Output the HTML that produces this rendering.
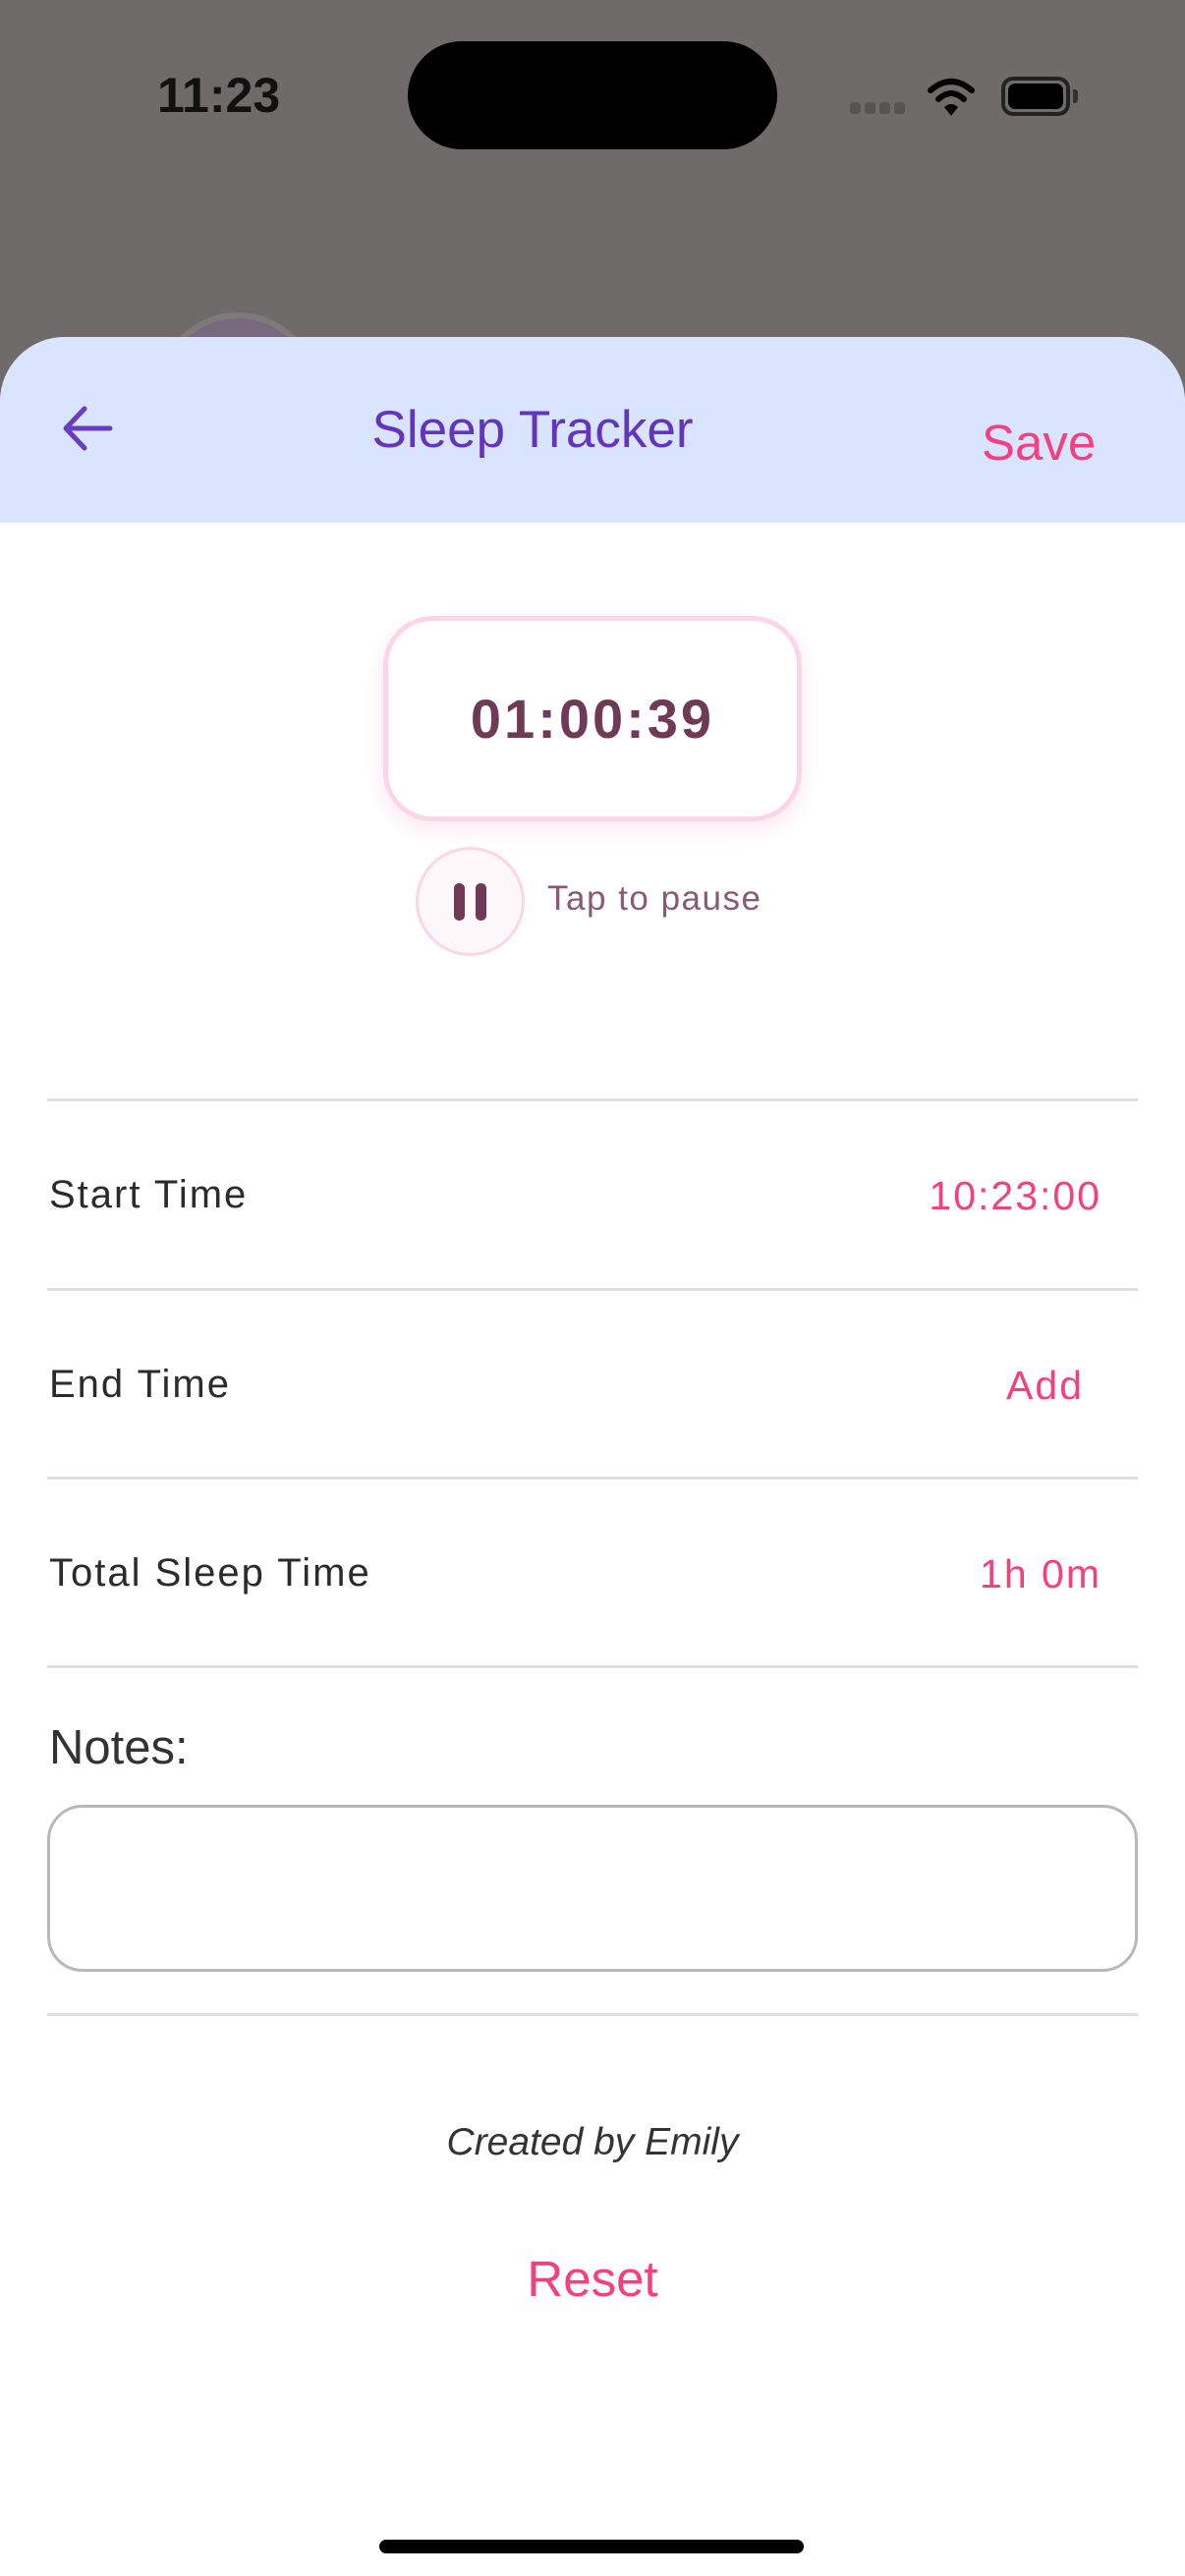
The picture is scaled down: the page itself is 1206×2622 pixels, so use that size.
<!DOCTYPE html>
<html><head><meta charset="utf-8">
<style>
*{margin:0;padding:0;box-sizing:border-box}
body{width:1206px;height:2622px;background:#706b6b;position:relative;overflow:hidden;font-family:"Liberation Sans","DejaVu Sans",sans-serif}
.abs{position:absolute}
.sheet{left:0;top:343px;width:1206px;height:2279px;background:#fff;border-radius:66px 66px 0 0;overflow:hidden}
.hdr{left:0;top:0;width:1206px;height:189px;background:#d9e4fe}
.line{position:absolute;left:48px;width:1110px;height:3px;background:#dedede}
.lbl{position:absolute;left:50px;font-size:40px;color:#2b2b2b;letter-spacing:2px}
.val{position:absolute;font-size:41px;color:#f4407f;letter-spacing:2px}
</style></head><body>
<div class="abs" style="left:160px;top:68px;font-size:50px;font-weight:bold;color:#111">11:23</div>
<div class="abs" style="left:415px;top:42px;width:376px;height:110px;border-radius:55px;background:#000"></div>
<div class="abs" style="left:865px;top:104px;width:60px;height:12px;display:flex;gap:4px">
<span style="width:11px;height:12px;background:#555;border-radius:3px"></span><span style="width:11px;height:12px;background:#555;border-radius:3px"></span><span style="width:11px;height:12px;background:#555;border-radius:3px"></span><span style="width:11px;height:12px;background:#555;border-radius:3px"></span></div>
<svg class="abs" style="left:943px;top:78px" width="50" height="42" viewBox="0 0 50 42"><path d="M4 14 Q25 -4 46 14" stroke="#000" stroke-width="6" fill="none" stroke-linecap="round"/><path d="M12 23 Q25 11 38 23" stroke="#000" stroke-width="6" fill="none" stroke-linecap="round"/><path d="M18 31 L25 40 L32 31 Q25 25 18 31Z" fill="#000"/></svg>
<div class="abs" style="left:1019px;top:78px;width:70px;height:40px;border:4px solid #222;border-radius:12px;padding:3px"><div style="width:100%;height:100%;background:#000;border-radius:7px"></div></div>
<div class="abs" style="left:1092px;top:91px;width:5px;height:14px;background:#333;border-radius:0 3px 3px 0"></div>
<div class="abs" style="left:160px;top:318px;width:164px;height:164px;border-radius:50%;background:#776a80;border:6px solid #7f7a7a"></div>
<div class="abs sheet">
<div class="abs hdr">
<svg class="abs" style="left:62px;top:68px" width="56" height="50" viewBox="0 0 56 50"><path d="M50 25 H6 M24 5 L5 25 L24 45" stroke="#6a3cc2" stroke-width="5" fill="none" stroke-linecap="round" stroke-linejoin="round"/></svg>
<div class="abs" style="left:0;width:1084px;top:64px;text-align:center;font-size:53px;color:#6434bd">Sleep Tracker</div>
<div class="abs" style="left:999px;top:78px;font-size:51px;color:#f4407f">Save</div>
</div>
<div class="abs" style="left:390px;top:284px;width:426px;height:209px;border:5px solid #fdd5e6;border-radius:50px;box-shadow:0 8px 20px rgba(253,213,230,0.5);text-align:center;line-height:199px;font-size:56px;font-weight:bold;color:#6e3a55;letter-spacing:3px">01:00:39</div>
<div class="abs" style="left:423px;top:519px;width:111px;height:111px;border-radius:50%;border:3px solid #fdd5e6;background:#fff8fb"></div>
<div class="abs" style="left:462px;top:556px;width:11px;height:38px;background:#6e3a55;border-radius:5px"></div>
<div class="abs" style="left:484px;top:556px;width:11px;height:38px;background:#6e3a55;border-radius:5px"></div>
<div class="abs" style="left:557px;top:552px;font-size:35px;color:#8a5a72;letter-spacing:1.5px">Tap to pause</div>
<div class="line" style="top:775px"></div>
<div class="lbl" style="top:851px">Start Time</div>
<div class="val" style="right:85px;top:851px">10:23:00</div>
<div class="line" style="top:968px"></div>
<div class="lbl" style="top:1044px">End Time</div>
<div class="val" style="right:103px;top:1044px">Add</div>
<div class="line" style="top:1160px"></div>
<div class="lbl" style="top:1236px">Total Sleep Time</div>
<div class="val" style="right:85px;top:1236px">1h 0m</div>
<div class="line" style="top:1352px"></div>
<div class="abs" style="left:50px;top:1408px;font-size:49px;color:#333;font-weight:300">Notes:</div>
<div class="abs" style="left:48px;top:1494px;width:1110px;height:170px;border:3px solid #b8b8b8;border-radius:36px"></div>
<div class="line" style="top:1706px"></div>
<div class="abs" style="left:0;width:1206px;top:1816px;text-align:center;font-size:39px;font-style:italic;color:#333">Created by Emily</div>
<div class="abs" style="left:0;width:1206px;top:1947px;text-align:center;font-size:51px;color:#f4407f">Reset</div>
<div class="abs" style="left:386px;top:2242px;width:432px;height:14px;border-radius:7px;background:#000"></div>
</div>
</body></html>
